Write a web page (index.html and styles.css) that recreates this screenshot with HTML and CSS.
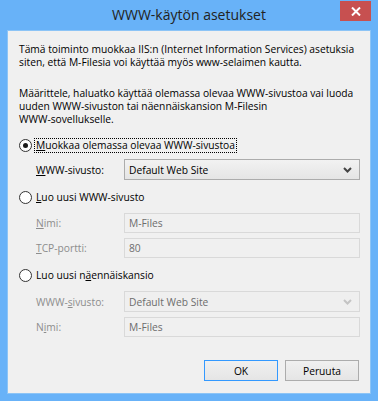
FILE: index.html
```html
<!DOCTYPE html>
<html>
<head>
<meta charset="utf-8">
<link rel="stylesheet" href="styles.css">
</head>
<body>
<div class="window">
  <div class="titlebar">
    <div class="title">WWW-käytön asetukset</div>
    <div class="close"><svg width="10" height="9" viewBox="0 0 10 9"><path d="M1 0.5 L9 8.5 M9 0.5 L1 8.5" stroke="#fff" stroke-width="2" fill="none"/></svg></div>
  </div>
  <div class="client">
    <p class="intro">Tämä toiminto muokkaa IIS:n (Internet Information Services) asetuksia<br>siten, että M-Filesia voi käyttää myös www-selaimen kautta.</p>
    <p class="intro second">Määrittele, haluatko käyttää olemassa olevaa WWW-sivustoa vai luoda<br>uuden WWW-sivuston tai näennäiskansion M-Filesin<br>WWW-sovellukselle.</p>

    <div class="option first"><span class="radio checked"></span><span class="olabel focus"><u>M</u>uokkaa olemassa olevaa WWW-sivustoa</span></div>
    <div class="field sel-row"><span class="flabel"><u>W</u>WW-sivusto:</span><div class="select"><span class="val">Default Web Site</span><svg class="chev" width="9" height="6" viewBox="0 0 9 6"><path d="M1 1 L4.5 4.5 L8 1" stroke="#444" stroke-width="2" fill="none"/></svg></div></div>

    <div class="option"><span class="radio"></span><span class="olabel"><u>L</u>uo uusi WWW-sivusto</span></div>
    <div class="field first-box disabled"><span class="flabel"><u>N</u>imi:</span><div class="textbox">M-Files</div></div>
    <div class="field next-box disabled"><span class="flabel"><u>T</u>CP-portti:</span><div class="textbox">80</div></div>

    <div class="option"><span class="radio"></span><span class="olabel">Luo uusi n<u>ä</u>ennäiskansio</span></div>
    <div class="field sel-row disabled"><span class="flabel">WWW-<u>s</u>ivusto:</span><div class="select"><span class="val">Default Web Site</span><svg class="chev" width="9" height="6" viewBox="0 0 9 6"><path d="M1 1 L4.5 4.5 L8 1" stroke="#c4c4c4" stroke-width="2" fill="none"/></svg></div></div>
    <div class="field next-box disabled"><span class="flabel">N<u>i</u>mi:</span><div class="textbox">M-Files</div></div>

    <div class="buttons"><div class="btn default">OK</div><div class="btn">Peruuta</div></div>
  </div>
</div>
</body>
</html>
```
FILE: styles.css
```css
* { box-sizing: border-box; }
html, body { margin: 0; padding: 0; }
body { background: #68b2f8; }
.window {
  width: 378px;
  height: 401px;
  background: #68b2f8;
  padding: 0 7px 7px 7px;
  display: flex;
  flex-direction: column;
  font-family: "Open Sans", "Noto Sans", sans-serif;
}
.titlebar {
  height: 30px;
  display: grid;
  grid-template-columns: 1fr auto 1fr;
  flex: none;
}
.title {
  grid-column: 2;
  align-self: center;
  font-size: 14px;
  color: #222;
  line-height: 18px;
}
.close {
  grid-column: 3;
  justify-self: end;
  align-self: start;
  margin-top: 1px;
  width: 31px;
  height: 20px;
  background: #c75050;
  display: flex;
  align-items: center;
  justify-content: center;
}
.close svg { display: block; }
.client {
  flex: 1;
  background: #f0f0f0;
  border: 1px solid #8cc4f6;
  padding: 12px 10px 0 11px;
  display: flex;
  flex-direction: column;
  font-size: 10.25px;
  color: #000;
}
.intro {
  margin: 0;
  line-height: 13px;
  white-space: nowrap;
}
.intro.second { margin-top: 18px; }
.option {
  display: flex;
  align-items: center;
  height: 15px;
  margin-top: 10px;
}
.option.first { margin-top: 12px; }
.radio {
  width: 13px;
  height: 13px;
  border: 1px solid #333;
  border-radius: 50%;
  background: #fff;
  display: flex;
  align-items: center;
  justify-content: center;
  flex: none;
}
.radio.checked::after {
  content: "";
  width: 5px;
  height: 5px;
  border-radius: 50%;
  background: #1a1a1a;
}
.olabel {
  margin-left: 2px;
  padding: 0 1px;
  line-height: 13px;
  border: 1px dotted transparent;
}
.olabel.focus { border-color: #000; }
.field {
  display: flex;
  align-items: center;
  padding-left: 17px;
}
.flabel {
  width: 88px;
  flex: none;
}
.sel-row { margin-top: 6px; }
.first-box { margin-top: 8px; }
.next-box { margin-top: 5px; }
.option + .sel-row.disabled { margin-top: 8px; }
.select {
  flex: 1;
  height: 21px;
  border: 1px solid #acacac;
  background: linear-gradient(#f2f2f2, #e5e5e5);
  display: flex;
  align-items: center;
  padding: 0 7px 0 4px;
}
.select .val { flex: 1; }
.chev { display: block; }
.textbox {
  flex: 1;
  height: 20px;
  border: 1px solid #d9d9d9;
  background: #f0f0f0;
  display: flex;
  align-items: center;
  padding-left: 4px;
}
.disabled { color: #6d6d6d; }
.disabled .flabel { color: #8d8d8d; }
.disabled .select {
  border-color: #d9d9d9;
  background: #efefef;
}
.buttons {
  display: flex;
  justify-content: flex-end;
  gap: 7px;
  margin-top: 23px;
  padding-right: 1px;
}
.btn {
  width: 74px;
  height: 21px;
  border: 1px solid #acacac;
  background: linear-gradient(#f0f0f0, #e5e5e5);
  display: flex;
  align-items: center;
  justify-content: center;
}
.btn.default { border-color: #3399ff; }
```
